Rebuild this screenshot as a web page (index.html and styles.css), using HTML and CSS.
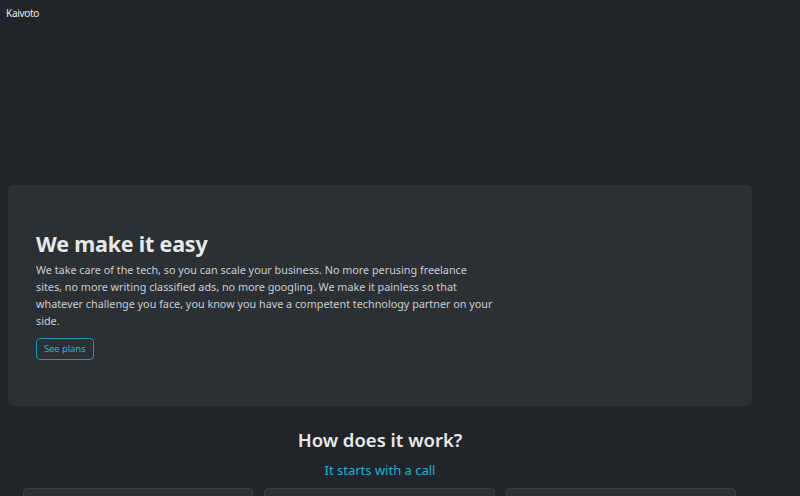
FILE: index.html
```html
<!DOCTYPE html>
<html lang="en">
<head>
<meta charset="utf-8">
<title>Kaivoto</title>
<link rel="stylesheet" href="styles.css">
</head>
<body>
<header class="topbar">
  <span class="brand">Kaivoto</span>
</header>
<main class="page">
  <section class="hero">
    <div class="hero-text">
      <h1 class="hero-title">We make it easy</h1>
      <p class="hero-lead">We take care of the tech, so you can scale your business. No more perusing freelance<br>
        sites, no more writing classified ads, no more googling. We make it painless so that<br>
        whatever challenge you face, you know you have a competent technology partner on your<br>
        side.</p>
      <button class="btn-outline" type="button">See plans</button>
    </div>
  </section>
  <section class="how">
    <h2 class="how-title">How does it work?</h2>
    <h3 class="how-sub">It starts with a call</h3>
    <div class="cards">
      <div class="card"></div>
      <div class="card"></div>
      <div class="card"></div>
    </div>
  </section>
</main>
</body>
</html>
```
FILE: styles.css
```css
html, body {
  margin: 0;
  padding: 0;
  background: #212529;
  color: #dee2e6;
  font-family: "Noto Sans", "Open Sans", sans-serif;
  overflow: hidden;
}
.topbar {
  height: 177px;
  padding: 6px 6px 0;
  box-sizing: border-box;
}
.brand {
  font-size: 10px;
  line-height: 14px;
  color: #e9ecef;
  letter-spacing: -0.3px;
  display: block;
}
.page {
  padding: 8px 0 0 8px;
  width: 744px;
}
.hero {
  background: #2b3035;
  border-radius: 5px;
  height: 221px;
  box-sizing: border-box;
  padding: 44px 28px;
}
.hero-text {
  width: 480px;
}
.hero-title {
  margin: 0;
  font-size: 21.5px;
  line-height: 30px;
  font-weight: 700;
  color: #e6e8ea;
  letter-spacing: -0.2px;
}
.hero-lead {
  margin: 2px 0 6px;
  font-size: 10.8px;
  line-height: 17px;
  color: #c9ced3;
}
.btn-outline {
  font-family: inherit;
  font-size: 9.5px;
  line-height: 14px;
  padding: 3px 7px;
  height: 22px;
  white-space: nowrap;
  letter-spacing: -0.1px;
  background: transparent;
  color: #2bb3d6;
  border: 1px solid #1e97b5;
  border-radius: 4px;
}
.how {
  text-align: center;
  padding: 22px 0 0;
}
.how-title {
  margin: 0;
  font-size: 18.5px;
  line-height: 24px;
  font-weight: 600;
  color: #e6e8ea;
}
.how-sub {
  margin: 9px 0 0;
  font-size: 13px;
  line-height: 18px;
  font-weight: 400;
  color: #27b0d3;
}
.cards {
  display: flex;
  gap: 11px;
  padding: 0 16px 0 15px;
  margin-top: 9px;
}
.card {
  flex: 1;
  height: 60px;
  background: #2b3035;
  border: 1px solid #3a4047;
  border-radius: 4px;
}
```
